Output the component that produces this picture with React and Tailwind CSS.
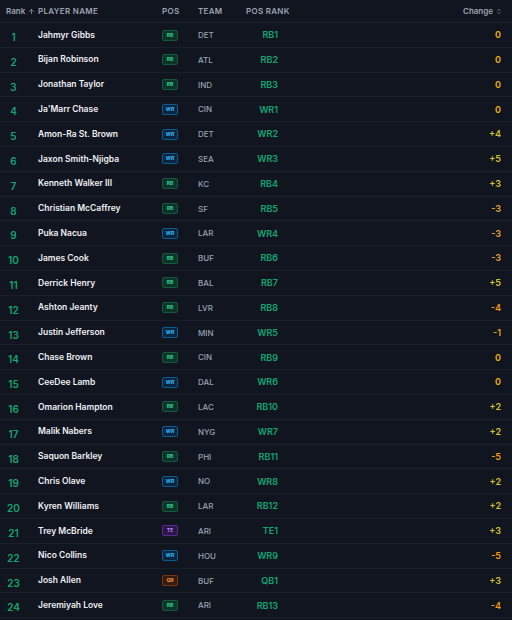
import React from "react";

const players = [
  [1, "Jahmyr Gibbs", "RB", "DET", "RB1", "0"],
  [2, "Bijan Robinson", "RB", "ATL", "RB2", "0"],
  [3, "Jonathan Taylor", "RB", "IND", "RB3", "0"],
  [4, "Ja'Marr Chase", "WR", "CIN", "WR1", "0"],
  [5, "Amon-Ra St. Brown", "WR", "DET", "WR2", "+4"],
  [6, "Jaxon Smith-Njigba", "WR", "SEA", "WR3", "+5"],
  [7, "Kenneth Walker III", "RB", "KC", "RB4", "+3"],
  [8, "Christian McCaffrey", "RB", "SF", "RB5", "-3"],
  [9, "Puka Nacua", "WR", "LAR", "WR4", "-3"],
  [10, "James Cook", "RB", "BUF", "RB6", "-3"],
  [11, "Derrick Henry", "RB", "BAL", "RB7", "+5"],
  [12, "Ashton Jeanty", "RB", "LVR", "RB8", "-4"],
  [13, "Justin Jefferson", "WR", "MIN", "WR5", "-1"],
  [14, "Chase Brown", "RB", "CIN", "RB9", "0"],
  [15, "CeeDee Lamb", "WR", "DAL", "WR6", "0"],
  [16, "Omarion Hampton", "RB", "LAC", "RB10", "+2"],
  [17, "Malik Nabers", "WR", "NYG", "WR7", "+2"],
  [18, "Saquon Barkley", "RB", "PHI", "RB11", "-5"],
  [19, "Chris Olave", "WR", "NO", "WR8", "+2"],
  [20, "Kyren Williams", "RB", "LAR", "RB12", "+2"],
  [21, "Trey McBride", "TE", "ARI", "TE1", "+3"],
  [22, "Nico Collins", "WR", "HOU", "WR9", "-5"],
  [23, "Josh Allen", "QB", "BUF", "QB1", "+3"],
  [24, "Jeremiyah Love", "RB", "ARI", "RB13", "-4"],
];

const badgeStyles = {
  RB: "bg-[#0c3328] border-[#15573f] text-[#34d399]",
  WR: "bg-[#0b2540] border-[#0b5c8f] text-[#38bdf8]",
  TE: "bg-[#2a1746] border-[#5b2a94] text-[#c084fc]",
  QB: "bg-[#351c10] border-[#7a3414] text-[#fb923c]",
};

function changeColor(c) {
  if (c === "0") return "text-[#eab308]";
  if (c.startsWith("+")) return "text-[#d4c331]";
  if (c === "-1" || c === "-3") return "text-[#e3a825]";
  return "text-[#f59e0b]";
}

function PosBadge({ pos }) {
  return (
    <span
      className={`inline-flex h-[11px] w-[16px] items-center justify-center rounded-[2px] border text-[5px] font-bold leading-none ${badgeStyles[pos]}`}
    >
      {pos}
    </span>
  );
}

const cols = "grid grid-cols-[38px_124px_36px_48px_44px_1fr] items-center";

export default function App() {
  return (
    <div
      className="h-[620px] w-[512px] overflow-hidden bg-[#111520] text-white"
      style={{ fontFamily: "Inter, 'Liberation Sans', sans-serif" }}
    >
      <div className={`${cols} h-[23px] border-b border-[#1c2130] text-[8px] font-semibold text-[#9ca3af]`}>
        <div className="flex items-center gap-[3px] pl-[6px]">
          Rank
          <svg width="7" height="7" viewBox="0 0 24 24" fill="none" stroke="currentColor" strokeWidth="2.5" strokeLinecap="round">
            <path d="M12 19V5M5 12l7-7 7 7" />
          </svg>
        </div>
        <div className="uppercase tracking-[0.3px]">Player Name</div>
        <div className="uppercase tracking-[0.3px]">Pos</div>
        <div className="uppercase tracking-[0.3px]">Team</div>
        <div className="whitespace-nowrap uppercase tracking-[0.3px]">Pos Rank</div>
        <div className="flex items-center justify-end gap-[3px] pr-[10px]">
          Change
          <svg width="6" height="7" viewBox="0 0 24 24" fill="none" stroke="currentColor" strokeWidth="2.5" strokeLinecap="round">
            <path d="M7 8l5-5 5 5M7 16l5 5 5-5" />
          </svg>
        </div>
      </div>
      {players.map(([rank, name, pos, team, posRank, change]) => (
        <div key={rank} className={`${cols} h-[24.8px] border-b border-[#1a1f2c]`}>
          <div className="pl-[6px]">
            <span className="inline-block w-[15px] text-center text-[10px] font-semibold text-[#10a673]">
              {rank}
            </span>
          </div>
          <div className="truncate text-[8.5px] font-semibold text-[#eef0f3]">{name}</div>
          <div className="flex">
            <PosBadge pos={pos} />
          </div>
          <div className="text-[8px] font-medium text-[#9aa1ad]">{team}</div>
          <div className="pr-[12px] text-right text-[9px] font-semibold text-[#10a673]">{posRank}</div>
          <div className={`pr-[11px] text-right text-[9px] font-semibold ${changeColor(change)}`}>{change}</div>
        </div>
      ))}
    </div>
  );
}
